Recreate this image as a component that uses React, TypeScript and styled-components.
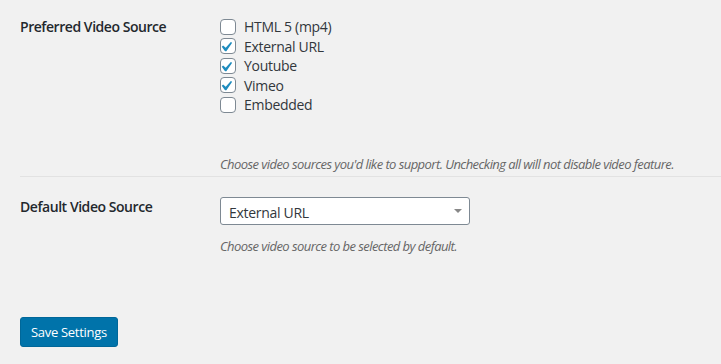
import styled, { createGlobalStyle } from 'styled-components';

const GlobalStyle = createGlobalStyle`
  * { box-sizing: border-box; }
  body {
    margin: 0;
    background: #f1f1f1;
    font-family: "Segoe UI", "Open Sans", "Noto Sans", sans-serif;
    color: #23282d;
  }
`;

const Page = styled.div`
  padding: 0 0 0 20px;
  min-height: 364px;
`;

const Row = styled.div<{ $top: number; $bottom: number; $divider?: boolean }>`
  display: grid;
  grid-template-columns: 200px 1fr;
  padding: ${(p) => p.$top}px 0 ${(p) => p.$bottom}px;
  border-bottom: ${(p) => (p.$divider ? '1px solid #e2e2e2' : 'none')};
`;

const Label = styled.div`
  font-size: 14px;
  font-weight: 600;
  line-height: 20px;
  letter-spacing: -0.45px;
  color: #23282d;
`;

const Field = styled.div`
  display: flex;
  flex-direction: column;
`;

const CheckList = styled.div`
  display: flex;
  flex-direction: column;
`;

const CheckRow = styled.label`
  display: flex;
  align-items: center;
  gap: 8px;
  height: 19.5px;
  font-size: 14px;
  letter-spacing: -0.3px;
  color: #32373c;
`;

const Box = styled.span`
  width: 16px;
  height: 16px;
  border: 1px solid #7e8993;
  border-radius: 4px;
  background: #fff;
  display: flex;
  flex-shrink: 0;
  overflow: hidden;
  svg {
    margin: -1px;
  }
`;

const Description = styled.p<{ $gap: number }>`
  margin: ${(p) => p.$gap}px 0 0;
  font-size: 13px;
  font-style: italic;
  line-height: 19.5px;
  letter-spacing: -0.56px;
  white-space: nowrap;
  color: #666;
`;

const SelectWrap = styled.div`
  position: relative;
  width: 250px;
`;

const Select = styled.select`
  appearance: none;
  -webkit-appearance: none;
  width: 100%;
  height: 28px;
  border: 1px solid #7e8993;
  border-radius: 3px;
  background: #fff;
  padding: 3px 24px 0 8px;
  font-family: inherit;
  font-size: 14px;
  letter-spacing: -0.3px;
  color: #32373c;
  outline: none;
`;

const Arrow = styled.span`
  position: absolute;
  right: 8px;
  top: 12px;
  width: 0;
  height: 0;
  border-left: 4px solid transparent;
  border-right: 4px solid transparent;
  border-top: 4px solid #888;
  pointer-events: none;
`;

const SaveButton = styled.button`
  margin-top: 60px;
  height: 30px;
  padding: 0 10px;
  background: #0073aa;
  border: 1px solid #006799;
  border-radius: 3px;
  color: #fff;
  font-family: inherit;
  font-size: 13px;
  letter-spacing: -0.3px;
  line-height: 28px;
  cursor: pointer;
`;

const SOURCES = [
  { label: 'HTML 5 (mp4)', checked: false },
  { label: 'External URL', checked: true },
  { label: 'Youtube', checked: true },
  { label: 'Vimeo', checked: true },
  { label: 'Embedded', checked: false },
];

function Check({ checked }: { checked: boolean }) {
  return (
    <Box>
      {checked && (
        <svg width="16" height="16" viewBox="4 1 16 16">
          <path d="M14.83 4.89l1.34.94-5.81 8.38H9.02L5.78 9.67l1.34-1.25 2.57 2.4z" fill="#1e8cbe" />
        </svg>
      )}
    </Box>
  );
}

export default function App() {
  return (
    <Page>
      <GlobalStyle />
      <Row $top={17} $bottom={2} $divider>
        <Label>Preferred Video Source</Label>
        <Field>
          <CheckList>
            {SOURCES.map((s) => (
              <CheckRow key={s.label}>
                <Check checked={s.checked} />
                {s.label}
              </CheckRow>
            ))}
          </CheckList>
          <Description $gap={40}>
            Choose video sources you'd like to support. Unchecking all will not disable video feature.
          </Description>
        </Field>
      </Row>
      <Row $top={20} $bottom={0}>
        <Label>Default Video Source</Label>
        <Field>
          <SelectWrap>
            <Select defaultValue="external">
              <option value="html5">HTML 5 (mp4)</option>
              <option value="external">External URL</option>
              <option value="youtube">Youtube</option>
              <option value="vimeo">Vimeo</option>
              <option value="embedded">Embedded</option>
            </Select>
            <Arrow />
          </SelectWrap>
          <Description $gap={12}>Choose video source to be selected by default.</Description>
        </Field>
      </Row>
      <SaveButton>Save Settings</SaveButton>
    </Page>
  );
}
